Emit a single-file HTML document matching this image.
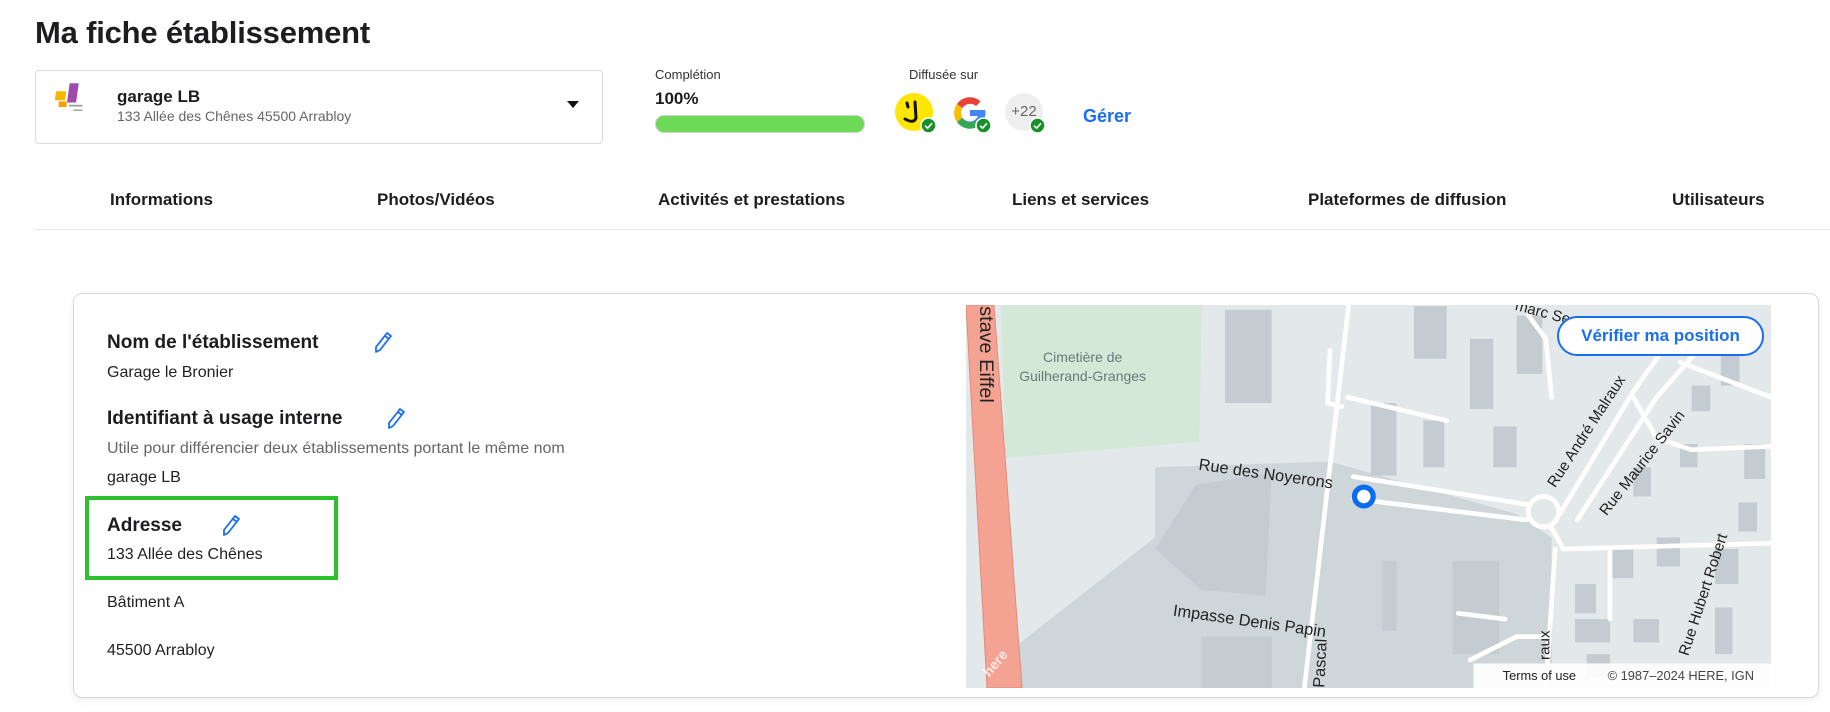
<!DOCTYPE html>
<html><head><meta charset="utf-8"><style>
*{margin:0;padding:0;box-sizing:border-box}
body{width:1830px;height:712px;background:#fff;font-family:"Liberation Sans",sans-serif;color:#1d1d1f;position:relative;overflow:hidden}
.a{position:absolute;white-space:nowrap}
h1{position:absolute;left:35px;top:15px;font-size:31px;font-weight:600;color:#1d1d1f;letter-spacing:-0.2px}
.sel{position:absolute;left:35px;top:70px;width:568px;height:74px;border:1px solid #d9d9de;border-radius:4px}
.tab{position:absolute;top:190px;font-size:17px;font-weight:700;color:#1d1d1f}
.card{position:absolute;left:73px;top:293px;width:1746px;height:405px;border:1px solid #d6d6dc;border-radius:9px;box-shadow:0 3px 8px rgba(0,0,0,.06)}
.h{font-size:19px;font-weight:700;color:#1d1d1f}
.t{font-size:16px;color:#222}
.chk{position:absolute;width:17px;height:17px}
</style></head><body>
<svg width="0" height="0" style="position:absolute"><defs>
<g id="pen"><path d="M15 2 L19 5 L8 19 L4 21 L4 16 Z M13 5 L17 8" stroke="#1a6ef0" stroke-width="1.8" fill="none" stroke-linejoin="round"/></g>
<g id="ck"><circle cx="8.5" cy="8.5" r="7.5" fill="#16912a" stroke="#fff" stroke-width="1.5"/><path d="M5 8.7 L7.6 11.2 L12 6.2" stroke="#fff" stroke-width="1.6" fill="none"/></g>
</defs></svg>
<h1>Ma fiche établissement</h1>
<div class="sel">
 <svg class="a" style="left:18px;top:10px" width="32" height="34" viewBox="0 0 28 30">
  <rect x="3" y="9" width="9" height="8" fill="#f5b800" transform="skewX(-8)"/>
  <rect x="14" y="2" width="8" height="17" fill="#a04ab0" transform="skewX(-8)"/>
  <rect x="4" y="18" width="7" height="5" fill="#f5a000"/>
  <rect x="13" y="21" width="12" height="1.5" fill="#999"/>
  <rect x="17" y="25" width="8" height="1.5" fill="#aaa"/>
 </svg>
 <div class="a" style="left:81px;top:16px;font-size:17px;font-weight:700">garage LB</div>
 <div class="a" style="left:81px;top:37px;font-size:14px;color:#666">133 Allée des Chênes 45500 Arrabloy</div>
 <div class="a" style="left:531px;top:30px;width:0;height:0;border-left:6px solid transparent;border-right:6px solid transparent;border-top:7px solid #111"></div>
</div>
<div class="a" style="left:655px;top:67px;font-size:13px;color:#333">Complétion</div>
<div class="a" style="left:655px;top:89px;font-size:17px;font-weight:700">100%</div>
<div class="a" style="left:655px;top:115px;width:210px;height:18px;border-radius:9px;background:#6cd957;border:1px solid #cfcfcf"></div>
<div class="a" style="left:909px;top:67px;font-size:13px;color:#333">Diffusée sur</div>
<div class="a" style="left:895px;top:93px;width:38px;height:38px;border-radius:50%;background:#ffe600"></div>
<svg class="a" style="left:895px;top:93px" width="38" height="38"><path d="M12 10 L13 14 M20 9 L21 25 Q19 31 10 26" stroke="#111" stroke-width="3" fill="none" stroke-linecap="round"/></svg>
<svg class="chk" style="left:920px;top:117px"><use href="#ck"/></svg>
<svg class="a" style="left:951px;top:94px" width="38" height="38" viewBox="0 0 38 38">
 <path d="M33 16 H19 v6 h8 a9 9 0 1 1 -2 -10 l4.5 -4.5 A15.5 15.5 0 1 0 34.5 19 q0-1.5-.3-3z" fill="#4285f4"/>
 <path d="M6 10 A15.5 15.5 0 0 1 29.5 7.5 L25 12 A9 9 0 0 0 11.5 14z" fill="#ea4335"/>
 <path d="M6 10 L11.5 14 A9 9 0 0 0 11.5 24 L6 28 A15.5 15.5 0 0 1 6 10z" fill="#fbbc05"/>
 <path d="M6 28 L11.5 24 A9 9 0 0 0 25.5 26 L30 30 A15.5 15.5 0 0 1 6 28z" fill="#34a853"/>
</svg>
<svg class="chk" style="left:975px;top:117px"><use href="#ck"/></svg>
<div class="a" style="left:1005px;top:93px;width:38px;height:38px;border-radius:50%;background:#eee;font-size:15px;color:#666;text-align:center;line-height:38px">+22</div>
<svg class="chk" style="left:1029px;top:117px"><use href="#ck"/></svg>
<div class="a" style="left:1083px;top:106px;font-size:18px;font-weight:600;color:#1a6ef0">Gérer</div>

<div class="tab" style="left:110px">Informations</div>
<div class="tab" style="left:377px">Photos/Vidéos</div>
<div class="tab" style="left:658px">Activités et prestations</div>
<div class="tab" style="left:1012px">Liens et services</div>
<div class="tab" style="left:1308px">Plateformes de diffusion</div>
<div class="tab" style="left:1672px">Utilisateurs</div>
<div class="a" style="left:35px;top:229px;width:1795px;height:1px;background:#e6e6e6"></div>

<div class="card"></div>
<div class="a h" style="left:107px;top:332px">Nom de l'établissement</div>
<svg class="a" style="left:372px;top:331px" width="22" height="23"><use href="#pen"/></svg>
<div class="a t" style="left:107px;top:364px">Garage le Bronier</div>
<div class="a h" style="left:107px;top:408px">Identifiant à usage interne</div>
<svg class="a" style="left:385px;top:407px" width="22" height="23"><use href="#pen"/></svg>
<div class="a t" style="left:107px;top:440px;color:#666">Utile pour différencier deux établissements portant le même nom</div>
<div class="a t" style="left:107px;top:469px">garage LB</div>
<div class="a" style="left:85px;top:496px;width:253px;height:84px;border:4px solid #2ec12e"></div>
<div class="a h" style="left:107px;top:515px">Adresse</div>
<svg class="a" style="left:220px;top:514px" width="22" height="23"><use href="#pen"/></svg>
<div class="a t" style="left:107px;top:546px">133 Allée des Chênes</div>
<div class="a t" style="left:107px;top:594px">Bâtiment A</div>
<div class="a t" style="left:107px;top:642px">45500 Arrabloy</div>

<svg class="a" style="left:966px;top:305px" width="805" height="383" viewBox="828 261 690 328" preserveAspectRatio="none" font-family="Liberation Sans, sans-serif">
 <rect x="828" y="261" width="690" height="328" fill="#e3e8eb"/>
 <polygon points="990,400 1140,395 1300,440 1330,460 1330,589 862,589 862,560 990,460" fill="#cfd6da"/>
 <polygon points="858,261 1030,261 1028,378 862,392" fill="#d3e8d6"/>
 <g fill="#c5ccd1">
  <polygon points="1025,415 1090,405 1085,510 1030,505 990,470"/>
  <rect x="1050" y="265" width="40" height="80"/>
  <rect x="1175" y="345" width="22" height="62"/>
  <rect x="1212" y="262" width="28" height="45"/>
  <rect x="1260" y="290" width="20" height="60"/>
  <rect x="1280" y="365" width="20" height="35"/>
  <rect x="1300" y="270" width="22" height="50"/>
  <rect x="1245" y="480" width="40" height="80"/>
  <rect x="1030" y="545" width="60" height="44"/>
  <rect x="1185" y="480" width="12" height="60"/>
  <rect x="1220" y="360" width="18" height="40"/>
  <rect x="1380" y="470" width="20" height="25"/><rect x="1420" y="460" width="20" height="25"/>
  <rect x="1470" y="470" width="20" height="30"/><rect x="1350" y="500" width="18" height="25"/>
  <rect x="1400" y="530" width="22" height="20"/><rect x="1470" y="520" width="15" height="40"/>
  <rect x="1450" y="330" width="16" height="22"/><rect x="1475" y="300" width="16" height="30"/>
  <rect x="1495" y="380" width="18" height="30"/><rect x="1400" y="400" width="15" height="25"/>
  <rect x="1350" y="530" width="30" height="20"/><rect x="1440" y="380" width="15" height="20"/>
  <rect x="1490" y="430" width="16" height="25"/><rect x="1360" y="560" width="20" height="20"/>
 </g>
 <polygon points="828,261 852,261 876,589 846,589" fill="#f4a392" stroke="#e08878" stroke-width="0.8"/>
 <g stroke="#fff" stroke-width="4" fill="none" stroke-linecap="round">
  <path d="M1156 261 L1118 589"/>
  <path d="M1140 300 L1138 345 L1150 348"/>
  <path d="M1155 340 L1240 360"/>
  <path d="M1160 408 L1310 432 M1160 427 L1308 445"/>
  <path d="M1337 440 L1400 335 L1425 300 M1352 445 L1420 340 L1455 300"/>
  <path d="M1330 452 L1340 470 L1518 465"/>
  <path d="M1333 470 L1325 589"/>
  <path d="M1400 340 L1420 375 L1450 385 L1518 382"/>
  <path d="M1440 310 L1518 340"/>
  <path d="M1250 525 L1290 530 M1260 565 L1300 545 L1325 545"/>
  <path d="M1310 270 L1325 290 L1330 340"/>
  <path d="M1380 470 L1380 530"/>
 </g>
 <circle cx="1323" cy="438" r="13" fill="none" stroke="#fff" stroke-width="4"/>
 <text x="928" y="310" font-size="12" fill="#6a7a7a" text-anchor="middle">Cimetière de</text>
 <text x="928" y="326" font-size="12" fill="#6a7a7a" text-anchor="middle">Guilherand-Granges</text>
 <text transform="translate(840,262) rotate(90)" font-size="17" fill="#222">stave Eiffel</text>
 <text transform="translate(1027,402) rotate(8)" font-size="14" fill="#222">Rue des Noyerons</text>
 <text transform="translate(1005,527) rotate(8)" font-size="14" fill="#222">Impasse Denis Papin</text>
 <text transform="translate(1135,589) rotate(-87)" font-size="14" fill="#222">Pascal</text>
 <text transform="translate(1333,418) rotate(-57)" font-size="13" fill="#222">Rue André Malraux</text>
 <text transform="translate(1377,442) rotate(-52)" font-size="13" fill="#222">Rue Maurice Savin</text>
 <text transform="translate(1447,562) rotate(-72)" font-size="13" fill="#222">Rue Hubert Robert</text>
 <text transform="translate(1328,565) rotate(-90)" font-size="13" fill="#222">raux</text>
 <text transform="translate(1298,265) rotate(15)" font-size="13" fill="#222">marc Se</text>
 <text transform="translate(848,580) rotate(-50)" font-size="12" font-weight="700" fill="#fff" opacity="0.8">here</text>
 <circle cx="1169" cy="425" r="8" fill="#fff" stroke="#0a6cf0" stroke-width="4.5"/>
 <rect x="1263" y="568" width="255" height="21" fill="#fff" opacity="0.9"/>
 <text x="1288" y="582" font-size="11" fill="#222">Terms of use</text>
 <text x="1378" y="582" font-size="11" fill="#444">© 1987–2024 HERE, IGN</text>
</svg>
<div class="a" style="left:1557px;top:316px;width:207px;height:40px;border:2px solid #1a6ef0;border-radius:20px;background:#fff;color:#1a6ef0;font-size:17px;font-weight:600;text-align:center;line-height:36px">Vérifier ma position</div>
</body></html>
